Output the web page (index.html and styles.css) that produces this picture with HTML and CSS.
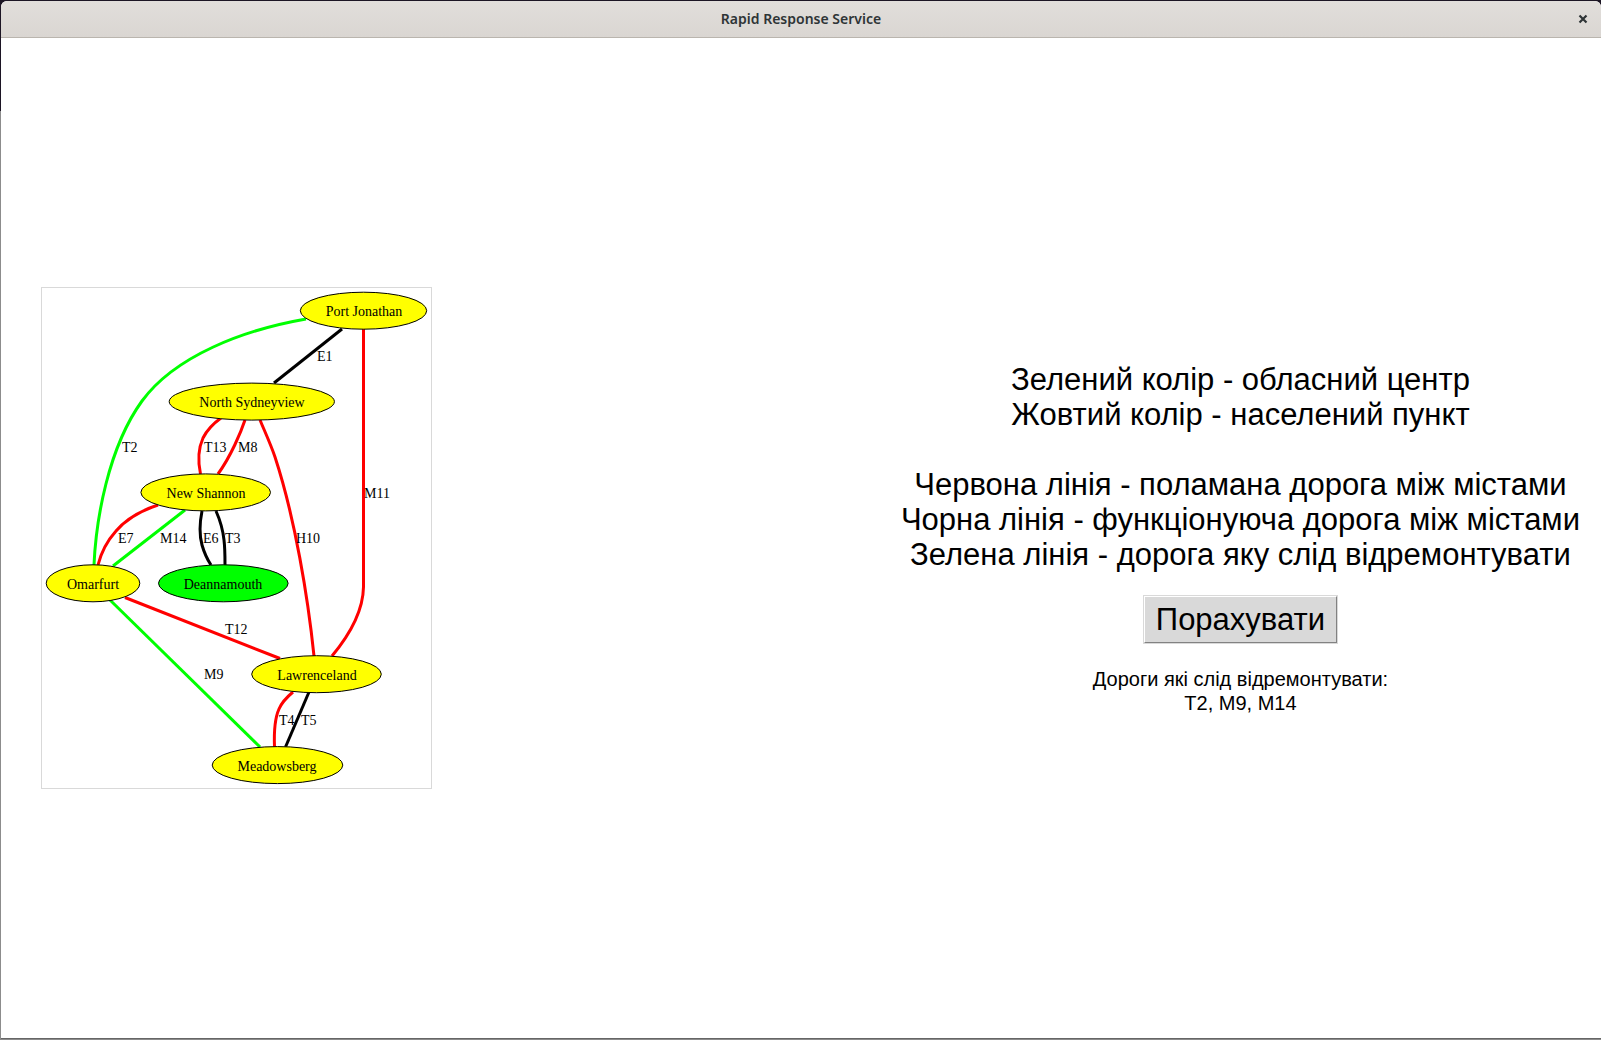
FILE: index.html
```html
<!DOCTYPE html>
<html lang="uk">
<head>
<meta charset="utf-8">
<meta name="viewport" content="width=device-width, initial-scale=1">
<title>Rapid Response Service</title>
<link rel="stylesheet" href="styles.css">
</head>
<body>
<div class="window">
  <header class="titlebar">
    <h1 class="title">Rapid Response Service</h1>
    <button class="close" type="button" aria-label="Close">
      <svg width="10" height="10" viewBox="0 0 10 10" aria-hidden="true"><path d="M1.500 1.500 L8.500 8.500 M8.500 1.500 L1.500 8.500"/></svg>
    </button>
  </header>
  <main class="content">
    <figure class="map">
      <svg class="graph" width="389" height="500" viewBox="0 0 389 500" role="img" aria-label="Road map">
        <g class="roads">
          <path class="repair" d="M264 31 C201 42 133 68 100 113 C66 160 54 232 52 277"/>
          <path class="working" d="M300 41 L232 95"/>
          <path class="broken" d="M321.500 41 V299 C321 325 305 350 290 368"/>
          <path class="broken" d="M179 130 C172 135 165 142 161 150 C156 161 156 174 158.500 186"/>
          <path class="broken" d="M203 132 C199 144 189 168 176 186"/>
          <path class="broken" d="M218 132 C223 144 229 157 233 169 C253 230 266 310 272 368"/>
          <path class="broken" d="M116 217 C101 222 85 230 74 243 C66 252 59 265 56 277"/>
          <path class="repair" d="M143 222 L71 278"/>
          <path class="working" d="M160 223 C158 233 157 246 160 257 C162 264 165 271 169 277"/>
          <path class="working" d="M174 223 C178 232 181 243 182 252 C183 260 183 268 183 277"/>
          <path class="broken" d="M83 309.500 L238 370.500"/>
          <path class="repair" d="M68 312 L218 459"/>
          <path class="broken" d="M251 404 C245 409 240 414 237 421 C232 432 232 446 232.500 459"/>
          <path class="working" d="M267 404 L243.500 459"/>
        </g>
        <g class="towns">
          <ellipse cx="321.500" cy="22.700" rx="63.200" ry="18.500"/>
          <ellipse cx="209.800" cy="113.600" rx="82.600" ry="18.500"/>
          <ellipse cx="163.700" cy="204.400" rx="64.800" ry="18.500"/>
          <ellipse cx="51" cy="295.300" rx="46.800" ry="18.500"/>
          <ellipse class="centre" cx="181.300" cy="295.300" rx="64.800" ry="18.500"/>
          <ellipse cx="274.500" cy="386.200" rx="64.800" ry="18.500"/>
          <ellipse cx="235.500" cy="477.100" rx="65.300" ry="18.500"/>
        </g>
        <g class="names">
          <text x="322" y="28">Port Jonathan</text>
          <text x="210" y="119">North Sydneyview</text>
          <text x="164" y="210">New Shannon</text>
          <text x="51" y="301">Omarfurt</text>
          <text x="181" y="301">Deannamouth</text>
          <text x="275" y="392">Lawrenceland</text>
          <text x="235" y="483">Meadowsberg</text>
        </g>
        <g class="labels">
          <text x="275" y="73">E1</text>
          <text x="80" y="164">T2</text>
          <text x="162" y="164">T13</text>
          <text x="196" y="164">M8</text>
          <text x="322" y="210">M11</text>
          <text x="76" y="255">E7</text>
          <text x="118" y="255">M14</text>
          <text x="161" y="255">E6</text>
          <text x="183" y="255">T3</text>
          <text x="254" y="255">H10</text>
          <text x="183" y="346">T12</text>
          <text x="162" y="391">M9</text>
          <text x="237" y="437">T4</text>
          <text x="259" y="437">T5</text>
        </g>
      </svg>
    </figure>
    <section class="panel">
      <div class="legend">
        <p>Зелений колір - обласний центр<br>Жовтий колір - населений пункт</p>
        <p>Червона лінія - поламана дорога між містами<br>Чорна лінія - функціонуюча дорога між містами<br>Зелена лінія - дорога яку слід відремонтувати</p>
      </div>
      <button class="calculate" type="button">Порахувати</button>
      <p class="result">Дороги які слід відремонтувати:<br>T2, M9, M14</p>
    </section>
  </main>
</div>
</body>
</html>
```
FILE: styles.css
```css
* {
  box-sizing: border-box;
}

body {
  margin: 0;
  padding: 1px 0 0 1px;
  min-height: 100vh;
  display: flex;
  background: linear-gradient(#1c1524 0, #1c1524 111px, #8c8c8c 111px, #8c8c8c 100%);
}

.window {
  flex: 1;
  display: flex;
  flex-direction: column;
  margin-bottom: 2px;
  border-radius: 6px 6px 0 0;
  background: #fff;
  box-shadow: 0 1px 0 #666;
  overflow: hidden;
}

.titlebar {
  display: grid;
  grid-template-columns: 36px 1fr 36px;
  align-items: center;
  height: 37px;
  border-bottom: 1px solid #bab5ae;
  background: linear-gradient(#e1dedb, #dad6d2);
}

.title {
  grid-column: 2;
  margin: 0;
  color: #2e3436;
  font: 600 14px/20px "Noto Sans", sans-serif;
  text-align: center;
}

.close {
  display: flex;
  justify-content: center;
  padding: 8px 0;
  border: 0;
  background: none;
}

.close path {
  fill: none;
  stroke: #2e3436;
  stroke-width: 2.2;
}

.content {
  flex: 1;
  display: flex;
  align-items: center;
  justify-content: space-between;
  padding: 0 21px 0 40px;
}

.map {
  margin: 0;
  border: 1px solid #d9d9d9;
}

.graph {
  display: block;
}

.roads path {
  fill: none;
  stroke-width: 3;
}

.roads .repair {
  stroke: #0f0;
}

.roads .broken {
  stroke: #f00;
}

.roads .working {
  stroke: #000;
}

.towns ellipse {
  fill: #ff0;
  stroke: #000;
}

.towns .centre {
  fill: #0f0;
}

.graph text {
  font: 14px "Liberation Serif", serif;
}

.names {
  text-anchor: middle;
}

.panel {
  display: flex;
  flex-direction: column;
  align-items: center;
  gap: 24px;
  color: #000;
  font-family: "Liberation Sans", sans-serif;
  text-align: center;
}

.legend {
  display: grid;
  gap: 35px;
  font-size: 31px;
  line-height: 35px;
}

.legend p,
.result {
  margin: 0;
}

.calculate {
  padding: 5px 11px;
  border: 1px solid;
  border-color: #fff #828282 #828282 #fff;
  outline: 1px solid #d9d9d9;
  background: #d9d9d9;
  color: #000;
  font: 31px/35px "Liberation Sans", sans-serif;
}

.result {
  font-size: 20px;
  line-height: 24px;
}
```
